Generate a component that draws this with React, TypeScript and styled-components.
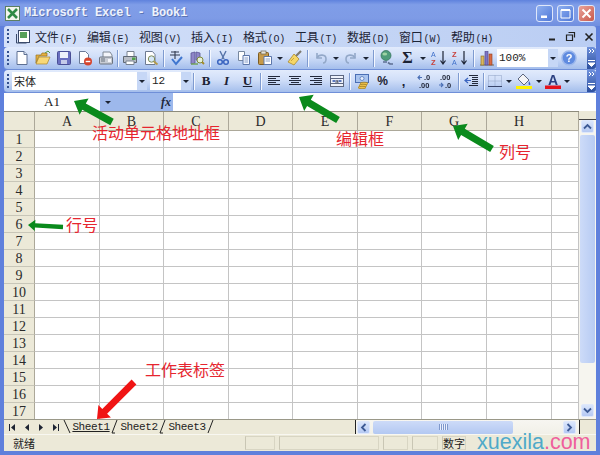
import React from 'react';
import styled, { createGlobalStyle } from 'styled-components';

const MONO = '"Liberation Mono", "Noto Sans CJK SC", monospace';
const SERIF = '"Liberation Serif", serif';
const CJK = '"Noto Sans CJK SC", "Liberation Sans", sans-serif';

const GlobalStyle = createGlobalStyle`
  html, body { margin: 0; padding: 0; background: #fff; }
`;

const Window = styled.div`
  position: relative;
  width: 600px;
  height: 455px;
  box-sizing: border-box;
  padding: 0 4px 4px;
  overflow: hidden;
  display: flex;
  flex-direction: column;
  background: #5f80dc;
  font-family: ${CJK};
`;

const TitleBar = styled.div`
  height: 26px;
  margin: 0 -4px;
  padding: 0 5px;
  flex: none;
  display: flex;
  align-items: center;
  background: linear-gradient(180deg, #5f82dd 0%, #7f9de8 18%, #7e9be6 70%, #6f8edf 100%);
`;

const TitleText = styled.span`
  margin-left: 4px;
  font: bold 12px ${MONO};
  letter-spacing: -0.1px;
  color: #eef2fc;
  text-shadow: 1px 1px 0 #5a74b4;
`;

const WindowButtons = styled.div`
  margin-left: auto;
  display: flex;
  gap: 4px;
`;

const WindowButton = styled.span<{ $close?: boolean }>`
  width: 17px;
  height: 17px;
  box-sizing: border-box;
  border: 1px solid #dfe7fa;
  border-radius: 3px;
  display: flex;
  align-items: center;
  justify-content: center;
  background: ${(p) =>
    p.$close
      ? 'linear-gradient(135deg, #e9a39b, #c9584a)'
      : 'linear-gradient(135deg, #8fb0f0, #4f78d8)'};
`;

const MenuBar = styled.div`
  height: 21px;
  flex: none;
  display: flex;
  align-items: center;
  border-radius: 3px 3px 0 0;
  background: linear-gradient(90deg, #d5e1f9 0%, #c4d5f5 60%, #bacdf3 100%);
`;

const Grip = styled.span`
  width: 2px;
  height: 15px;
  margin-left: 3px;
  flex: none;
  background: repeating-linear-gradient(180deg, #33508f 0 2px, transparent 2px 4px);
`;

const SheetGlyph = styled.span`
  width: 24px;
  margin-left: 2px;
  flex: none;
  display: flex;
  justify-content: center;
`;

const MenuItem = styled.span`
  width: 52px;
  flex: none;
  box-sizing: border-box;
  font-size: 12px;
  line-height: 21px;
  color: #1c2436;
  white-space: nowrap;
  letter-spacing: -0.2px;
`;

const MenuKey = styled.span`
  font: 10px ${MONO};
  margin-left: 1px;
`;

const MenuControls = styled.div`
  margin-left: auto;
  width: 46px;
  display: flex;
  justify-content: space-between;
  align-items: center;
  padding-right: 2px;
  font-size: 12px;
`;

const Toolbar = styled.div`
  height: 23px;
  flex: none;
  display: flex;
  align-items: center;
  border-bottom: 1px solid #6f8fd8;
  box-sizing: border-box;
  background: linear-gradient(180deg, #e2ebfc 0%, #d0def8 45%, #a4beec 100%);
  border-radius: 4px 0 0 4px;
`;

const Tool = styled.span<{ $w?: number }>`
  width: ${(p) => p.$w ?? 21}px;
  height: 20px;
  flex: none;
  display: flex;
  align-items: center;
  justify-content: center;
  svg {
    filter: blur(0.3px);
  }
`;

const Separator = styled.span<{ $w?: number }>`
  width: ${(p) => p.$w ?? 3}px;
  height: 17px;
  flex: none;
  display: flex;
  justify-content: center;
  &::before {
    content: '';
    width: 1px;
    background: #7f9bd0;
    box-shadow: 1px 0 0 #f4f8ff;
  }
`;

const DropCaret = styled.span`
  width: 0;
  height: 0;
  border-left: 3px solid transparent;
  border-right: 3px solid transparent;
  border-top: 3px solid #1d2433;
`;

const Combo = styled.span<{ $w: number; $gap?: number }>`
  width: ${(p) => p.$w}px;
  height: 18px;
  margin-right: ${(p) => p.$gap ?? 0}px;
  flex: none;
  box-sizing: border-box;
  display: flex;
  align-items: center;
  background: #fff;
`;

const ComboText = styled.span<{ $mono?: boolean }>`
  flex: 1;
  padding-left: 2px;
  font: 11px ${(p) => (p.$mono ? MONO : CJK)};
  color: #222;
  white-space: nowrap;
  overflow: hidden;
`;

const ComboArrow = styled.span`
  width: 10px;
  height: 100%;
  flex: none;
  display: flex;
  align-items: center;
  justify-content: center;
  background: #c6d7f6;
`;

const ToolEnd = styled.span`
  margin-left: auto;
  width: 9px;
  height: 22px;
  flex: none;
  display: flex;
  flex-direction: column;
  align-items: center;
  justify-content: space-between;
  padding: 2px 0;
  box-sizing: border-box;
  border-radius: 0 3px 3px 0;
  background: linear-gradient(180deg, #6f91dc, #2c4f9e);
`;

const Letter = styled.span<{ $italic?: boolean; $underline?: boolean; $serif?: boolean; $size?: number; $light?: boolean }>`
  font: ${(p) => (p.$light ? 'normal' : 'bold')} ${(p) => p.$size ?? 13}px ${(p) => (p.$serif ? SERIF : '"Liberation Sans", sans-serif')};
  font-style: ${(p) => (p.$italic ? 'italic' : 'normal')};
  text-decoration: ${(p) => (p.$underline ? 'underline' : 'none')};
  color: #1b2233;
`;

const FormulaBar = styled.div`
  height: 18px;
  flex: none;
  display: flex;
  background: #fff;
`;

const NameBox = styled.div`
  width: 96px;
  flex: none;
  text-align: center;
  font: 13px/18px ${SERIF};
  color: #222;
`;

const FormulaTools = styled.div`
  width: 73px;
  flex: none;
  padding: 0 2px 0 5px;
  box-sizing: border-box;
  display: flex;
  align-items: center;
  justify-content: space-between;
  background: #9db8ec;
`;

const FxMark = styled.span`
  font: italic bold 12px ${SERIF};
  color: #20283a;
`;

const SheetArea = styled.div`
  flex: 1;
  min-height: 0;
  display: flex;
  background: #fff;
`;

const CellGrid = styled.div`
  width: 575px;
  flex: none;
  display: grid;
  grid-template-columns: 31px 65px 64px 65px 64px 65px 64px 65px 65px 27px;
  grid-template-rows: 19px repeat(17, 17px);
  align-content: start;
  border-top: 1px solid #8d8b7c;
`;

const ColHead = styled.div`
  box-sizing: border-box;
  background: #ece9d8;
  border-right: 1px solid #aca899;
  border-bottom: 1px solid #aca899;
  text-align: center;
  font: 14px/19px ${SERIF};
  color: #2a2a2a;
`;

const RowHead = styled.div`
  box-sizing: border-box;
  background: #ece9d8;
  border-right: 1px solid #aca899;
  border-bottom: 1px solid #c8c6b8;
  text-align: center;
  font: 14px/18px ${SERIF};
  color: #2a2a2a;
`;

const Cell = styled.div`
  box-sizing: border-box;
  border-right: 1px solid #c4c4c4;
  border-bottom: 1px solid #c4c4c4;
`;

const VScroll = styled.div`
  width: 17px;
  flex: none;
  display: flex;
  flex-direction: column;
  align-items: center;
  background: #f6f5ef;
`;

const VScrollHead = styled.div`
  width: 100%;
  height: 8px;
  flex: none;
  border-bottom: 1px solid #444;
  background: #ece9d8;
`;

const ScrollButton = styled.span`
  width: 13px;
  height: 13px;
  flex: none;
  border-radius: 2px;
  display: flex;
  align-items: center;
  justify-content: center;
  background: linear-gradient(180deg, #dbe6fb, #b5c9f3);
  border: 1px solid #dfe8fb;
  box-sizing: border-box;
`;

const VThumb = styled.div`
  width: 15px;
  height: 228px;
  margin: 2px 0 41px;
  flex: none;
  border-radius: 2px;
  background: linear-gradient(90deg, #cddbf8, #b7cbf3);
`;

const TabRow = styled.div`
  height: 15px;
  flex: none;
  display: flex;
  align-items: center;
  background: #ece9d8;
  border-top: 1px solid #9a9888;
  box-sizing: border-box;
`;

const TabNav = styled.div`
  width: 59px;
  flex: none;
  display: flex;
  justify-content: space-around;
  align-items: center;
  padding-left: 1px;
  box-sizing: border-box;
`;

const Tabs = styled.div`
  width: 292px;
  flex: none;
  display: flex;
  align-items: center;
`;

const TabLabel = styled.span<{ $active?: boolean }>`
  width: 40px;
  flex: none;
  text-align: center;
  font: 11px/14px ${MONO};
  letter-spacing: -0.4px;
  color: #222;
  text-decoration: ${(p) => (p.$active ? 'underline' : 'none')};
`;

const HScroll = styled.div`
  width: 225px;
  height: 14px;
  flex: none;
  box-sizing: border-box;
  display: flex;
  align-items: center;
  padding: 0 1px;
  border-left: 1px solid #222;
  border-right: 1px solid #222;
  background: linear-gradient(180deg, #f7f6f1, #f1f0e8);
`;

const HThumb = styled.div`
  width: 140px;
  height: 13px;
  margin: 0 50px 0 3px;
  flex: none;
  border-radius: 2px;
  display: flex;
  align-items: center;
  justify-content: center;
  background: linear-gradient(180deg, #cddbf8, #b3c8f2);
`;

const ThumbRidges = styled.span`
  width: 9px;
  height: 6px;
  background: repeating-linear-gradient(90deg, #7f98cc 0 1px, #eaf0fd 1px 2px);
`;

const StatusBar = styled.div`
  height: 17px;
  flex: none;
  display: flex;
  align-items: center;
  background: #ece9d8;
  border-top: 1px solid #f8f7f1;
  box-sizing: border-box;
`;

const StatusText = styled.span`
  margin-left: 9px;
  width: 232px;
  flex: none;
  font-size: 11px;
  color: #222;
`;

const StatusPanel = styled.span<{ $w: number }>`
  width: ${(p) => p.$w}px;
  height: 14px;
  margin-right: 4px;
  flex: none;
  box-sizing: border-box;
  border: 1px solid #d8d5c3;
  border-left-color: #c9c6b4;
  font-size: 11px;
  line-height: 13px;
  color: #222;
  white-space: nowrap;
`;

const Overlay = styled.svg`
  position: absolute;
  left: 0;
  top: 0;
  pointer-events: none;
`;

const Callout = styled.span<{ $x: number; $y: number }>`
  position: absolute;
  left: ${(p) => p.$x}px;
  top: ${(p) => p.$y}px;
  font-size: 16px;
  line-height: 18px;
  color: #e6262f;
  white-space: nowrap;
`;

const Watermark = styled.span`
  position: absolute;
  left: 477px;
  top: 432px;
  font: 21.500px/21px "Liberation Sans", sans-serif;
  color: #4fa9c9;
`;

const WatermarkCom = styled.span`
  color: #ef5f9c;
`;

type IconProps = { children: React.ReactNode; size?: number };
const Ico = ({ children, size = 16 }: IconProps) => (
  <svg width={size} height={size} viewBox="0 0 16 16">
    {children}
  </svg>
);

const Doc = () => <path d="M3 1.5h7l3 3v10H3z" fill="#fff" stroke="#5c6f92" />;

const icons = {
  newDoc: <Ico><Doc /><path d="M10 1.5v3h3" fill="#dfe7f5" stroke="#5c6f92" /></Ico>,
  open: (
    <Ico>
      <path d="M1 5h5l1-2h5v3H4L1 13z" fill="#e5b040" stroke="#9a7420" strokeWidth=".7" />
      <path d="M1 14l3-7h11l-3 7z" fill="#f8d877" stroke="#a98428" strokeWidth=".7" />
      <path d="M10 3l3-2 2 2" fill="none" stroke="#4f9a4a" />
    </Ico>
  ),
  save: (
    <Ico>
      <rect x="1.5" y="1.5" width="13" height="13" rx="1" fill="#6a6fc0" stroke="#4a4f96" />
      <rect x="4" y="2" width="8" height="6" fill="#eef1fb" />
      <rect x="5" y="10" width="6" height="4" fill="#c5cbea" />
    </Ico>
  ),
  permission: (
    <Ico>
      <path d="M2.5 1.5h6l3 3v9h-9z" fill="#fff" stroke="#6a7a98" />
      <circle cx="11" cy="11.5" r="4" fill="#d6442c" />
      <rect x="8.7" y="10.8" width="4.6" height="1.4" fill="#fff" />
    </Ico>
  ),
  mail: (
    <Ico>
      <path d="M5 2h7l2 3v4H5z" fill="#f3f5fa" stroke="#7f8894" />
      <rect x="1.5" y="7" width="13" height="7" rx="1" fill="#c8ccd4" stroke="#6c7480" />
      <path d="M3 9h4M3 11h4" stroke="#69727f" />
      <rect x="10" y="9" width="3" height="3" fill="#f5f6fa" />
    </Ico>
  ),
  print: (
    <Ico>
      <path d="M5 1.5h7v5H5z" fill="#fff" stroke="#788290" />
      <path d="M1.5 6.5h13l0 6h-13z" fill="#b9bec7" stroke="#606874" />
      <path d="M4 11h8v3.5H4z" fill="#fff" stroke="#788290" />
      <rect x="10" y="7.5" width="3.5" height="2.5" fill="#4fa04a" />
    </Ico>
  ),
  preview: (
    <Ico>
      <path d="M2.5 1.5h7l2.5 3v10h-9.500z" fill="#fff" stroke="#6d7a92" />
      <circle cx="8.500" cy="9" r="3.200" fill="#d6e8f7" stroke="#7f8c58" />
      <path d="M11 11.500l3.500 3" stroke="#b49a48" strokeWidth="1.800" />
    </Ico>
  ),
  spell: (
    <Ico>
      <path d="M3 2h8M7 1v5M2 5h10M7 6v3" stroke="#30394e" strokeWidth="1.100" fill="none" />
      <path d="M4 9l4 5 6-7" stroke="#3f76cf" strokeWidth="2" fill="none" />
    </Ico>
  ),
  research: (
    <Ico>
      <path d="M2 3l4-1v11l-4 1zM7 2l4 1v7H7z" fill="#8f86c8" stroke="#5c5596" strokeWidth=".8" />
      <circle cx="11" cy="10" r="3" fill="#e6f0d9" stroke="#7d8a3a" />
      <path d="M13 12l2 2" stroke="#a38a28" strokeWidth="1.800" />
      <path d="M2 14h7" stroke="#73a05a" strokeWidth="1.500" />
    </Ico>
  ),
  cut: (
    <Ico>
      <path d="M5 1l4 8M11 1L7 9" stroke="#5673a8" strokeWidth="1.400" fill="none" />
      <circle cx="5" cy="12" r="2.300" fill="none" stroke="#3a64c0" strokeWidth="1.500" />
      <circle cx="11" cy="12" r="2.300" fill="none" stroke="#3a64c0" strokeWidth="1.500" />
    </Ico>
  ),
  copy: (
    <Ico>
      <path d="M2.500 1.500h6v9h-6z" fill="#fff" stroke="#76879f" />
      <path d="M7 5.500h6.500v9H7z" fill="#f2f6ff" stroke="#5d77aa" />
      <path d="M8.500 8h3.500M8.500 10h3.500M8.500 12h3.500" stroke="#8da2c8" />
    </Ico>
  ),
  paste: (
    <Ico>
      <rect x="1.500" y="2.500" width="10" height="12" rx="1" fill="#c69a4a" stroke="#7c5c22" />
      <rect x="4" y="1" width="5" height="3" fill="#e8e4d8" stroke="#6c6350" strokeWidth=".7" />
      <path d="M7 6.500h7.500v8H7z" fill="#fff" stroke="#5d77aa" />
      <path d="M8.500 9h4.500M8.500 11h4.500" stroke="#8da2c8" />
    </Ico>
  ),
  painter: (
    <Ico>
      <path d="M14 1L9 6" stroke="#7d7a70" strokeWidth="2.200" />
      <path d="M7 4l5 5-5 6-6-3z" fill="#f5d667" stroke="#a98a30" strokeWidth=".8" />
      <path d="M4 11l3-3" stroke="#c9a43c" />
    </Ico>
  ),
  undo: (
    <Ico>
      <path d="M4 3v5h5" fill="none" stroke="#93a8c8" strokeWidth="1.600" />
      <path d="M4 8c2-4 9-4 9 1 0 2-1 4-3 4" fill="none" stroke="#93a8c8" strokeWidth="1.600" />
    </Ico>
  ),
  redo: (
    <Ico>
      <path d="M12 3v5H7" fill="none" stroke="#93a8c8" strokeWidth="1.600" />
      <path d="M12 8c-2-4-9-4-9 1 0 2 1 4 3 4" fill="none" stroke="#93a8c8" strokeWidth="1.600" />
    </Ico>
  ),
  link: (
    <Ico>
      <circle cx="7" cy="5.500" r="5" fill="#4f9c7a" stroke="#2f6e58" strokeWidth=".7" />
      <ellipse cx="5.800" cy="4" rx="2.400" ry="1.600" fill="#9ed3a4" />
      <path d="M4 12h4M9 12.500l2 1.500h3" fill="none" stroke="#5e6f92" strokeWidth="1.700" />
    </Ico>
  ),
  sortAsc: (
    <Ico>
      <text x="0" y="6.500" fontSize="7" fontFamily="Liberation Sans" fill="#3d6ec9">A</text>
      <text x="0" y="15" fontSize="7.500" fontFamily="Liberation Sans" fontWeight="bold" fill="#c8403a">Z</text>
      <path d="M12 1v12M9.500 10.500l2.500 3.500 2.500-3.500" fill="none" stroke="#1e2536" strokeWidth="1.200" />
    </Ico>
  ),
  sortDesc: (
    <Ico>
      <text x="0" y="6.500" fontSize="7.500" fontFamily="Liberation Sans" fontWeight="bold" fill="#c8403a">Z</text>
      <text x="0" y="15" fontSize="7" fontFamily="Liberation Sans" fill="#3d6ec9">A</text>
      <path d="M12 1v12M9.500 10.500l2.500 3.500 2.500-3.500" fill="none" stroke="#1e2536" strokeWidth="1.200" />
    </Ico>
  ),
  chart: (
    <Ico>
      <path d="M1 15h14" stroke="#7a6a48" />
      <rect x="2" y="6" width="3" height="9" fill="#d9b860" stroke="#8a6a20" strokeWidth=".6" />
      <rect x="6" y="1.500" width="3" height="13.500" fill="#7c74c4" stroke="#4a428a" strokeWidth=".6" />
      <rect x="10" y="4" width="3" height="11" fill="#d86a42" stroke="#8e3d20" strokeWidth=".6" />
    </Ico>
  ),
  help: (
    <Ico>
      <circle cx="8" cy="8" r="7" fill="#5f8be0" stroke="#9db8ec" strokeWidth="1.500" />
      <text x="8" y="12" textAnchor="middle" fontSize="11" fontFamily="Liberation Sans" fontWeight="bold" fill="#fff">?</text>
    </Ico>
  ),
  alignLeft: <Ico><path d="M2 3.500h12M2 5.500h8M2 7.500h12M2 9.500h8M2 11.500h12" stroke="#232a3c" /></Ico>,
  alignCenter: <Ico><path d="M2 3.500h12M4 5.500h8M2 7.500h12M4 9.500h8M2 11.500h12" stroke="#232a3c" /></Ico>,
  alignRight: <Ico><path d="M2 3.500h12M6 5.500h8M2 7.500h12M6 9.500h8M2 11.500h12" stroke="#232a3c" /></Ico>,
  merge: (
    <Ico>
      <rect x="1.500" y="2.500" width="13" height="11" fill="#eef2fb" stroke="#5d6780" />
      <path d="M1.500 5.500h13M1.500 10.500h13" stroke="#5d6780" />
      <path d="M3.500 8h3M12.500 8h-3" stroke="#2b4fa8" strokeWidth="1.300" />
      <text x="8" y="10" textAnchor="middle" fontSize="6" fontFamily="Liberation Sans" fill="#1b2233">a</text>
    </Ico>
  ),
  currency: (
    <Ico>
      <rect x="1.500" y="1.500" width="13" height="8" fill="#a9c4ee" stroke="#4a6fb5" />
      <circle cx="8" cy="5.500" r="2" fill="#e8f0fc" stroke="#4a6fb5" strokeWidth=".7" />
      <ellipse cx="10" cy="10.500" rx="4" ry="1.300" fill="#eec24c" stroke="#a07c1c" strokeWidth=".7" />
      <ellipse cx="9" cy="12.500" rx="4" ry="1.300" fill="#eec24c" stroke="#a07c1c" strokeWidth=".7" />
      <ellipse cx="8" cy="14.500" rx="4" ry="1.200" fill="#eec24c" stroke="#a07c1c" strokeWidth=".7" />
    </Ico>
  ),
  incDecimal: (
    <Ico>
      <path d="M1 4.500h4M3 2.500l-2 2 2 2" fill="none" stroke="#4a6fb5" strokeWidth="1.100" />
      <text x="7" y="7" fontSize="7.500" fontFamily="Liberation Sans" fontWeight="bold" fill="#232a3c">.0</text>
      <text x="2" y="15" fontSize="7.500" fontFamily="Liberation Sans" fontWeight="bold" fill="#232a3c">.00</text>
    </Ico>
  ),
  decDecimal: (
    <Ico>
      <text x="2" y="7" fontSize="7.500" fontFamily="Liberation Sans" fontWeight="bold" fill="#232a3c">.00</text>
      <path d="M1 12h4M3 10l2 2-2 2" fill="none" stroke="#4a6fb5" strokeWidth="1.100" />
      <text x="7" y="15" fontSize="7.500" fontFamily="Liberation Sans" fontWeight="bold" fill="#232a3c">.0</text>
    </Ico>
  ),
  indent: (
    <Ico>
      <path d="M6 2.500h9M9 4.500h6M9 6.500h6M9 8.500h6M9 10.500h6M6 12.500h9" stroke="#232a3c" />
      <path d="M8 7.500H2M5 5l-3 2.500L5 10" fill="none" stroke="#3a64c0" strokeWidth="1.200" />
    </Ico>
  ),
  borders: (
    <Ico>
      <rect x="1.500" y="2.500" width="13" height="11" fill="none" stroke="#8ea0c4" strokeDasharray="1 1" />
      <path d="M8 2.500v11M1.500 8h13" stroke="#8ea0c4" strokeDasharray="1 1" />
      <path d="M1 13.500h14" stroke="#39456a" />
    </Ico>
  ),
  fill: (
    <Ico>
      <path d="M7 1l6 6-5 5-6-6z" fill="#f4f4f6" stroke="#5d6780" />
      <path d="M13 8c1 2 2 3 1 4-1 .5-2-.5-1-4z" fill="#3a64c0" />
      <rect x="0" y="13" width="16" height="3" fill="#fff200" />
    </Ico>
  ),
  fontColor: (
    <Ico>
      <text x="8" y="11.500" textAnchor="middle" fontSize="14" fontFamily="Liberation Sans" fontWeight="bold" fill="#2a3f80">A</text>
      <rect x="0" y="12.500" width="16" height="3.500" fill="#e3121c" />
    </Ico>
  ),
};

const ChevronGlyph = ({ up }: { up: boolean }) => (
  <svg width="9" height="7" viewBox="0 0 9 7">
    <path d={up ? 'M1 5.500l3.500-3.500 3.500 3.500' : 'M1 1.500l3.500 3.500 3.500-3.500'} fill="none" stroke="#3d5a94" strokeWidth="1.800" />
  </svg>
);

const SideGlyph = ({ left }: { left: boolean }) => (
  <svg width="7" height="9" viewBox="0 0 7 9">
    <path d={left ? 'M5.500 1L2 4.500 5.500 8' : 'M1.500 1L5 4.500 1.500 8'} fill="none" stroke="#3d5a94" strokeWidth="1.800" />
  </svg>
);

const GripEnd = () => (
  <ToolEnd>
    <svg width="7" height="5" viewBox="0 0 7 5">
      <path d="M1 0l2 2-2 2M4 0l2 2-2 2" fill="none" stroke="#fff" />
    </svg>
    <svg width="7" height="7" viewBox="0 0 7 7">
      <path d="M0 .500h7M0 3l3.500 3.500L7 3z" stroke="#fff" fill="#fff" />
    </svg>
  </ToolEnd>
);

const Drop = ({ w = 10 }: { w?: number }) => (
  <Tool $w={w}>
    <DropCaret />
  </Tool>
);

const NavGlyph = ({ d }: { d: string }) => (
  <svg width="8" height="9" viewBox="0 0 8 9">
    <path d={d} fill="#1e2433" />
  </svg>
);

const TabEdge = ({ d }: { d: string }) => (
  <svg width="8" height="14" viewBox="0 0 8 14">
    <path d={d} fill="none" stroke="#222" />
  </svg>
);

const arrowPoints = (x1: number, y1: number, x2: number, y2: number, half: number) => {
  // tail -> tip, shaft half-width plus a head twice as wide
  const len = Math.hypot(x2 - x1, y2 - y1);
  const ux = (x2 - x1) / len;
  const uy = (y2 - y1) / len;
  const nx = -uy;
  const ny = ux;
  const headLen = half * 3.2;
  const bx = x2 - ux * headLen;
  const by = y2 - uy * headLen;
  const pts = [
    [x1 + nx * half, y1 + ny * half],
    [bx + nx * half, by + ny * half],
    [bx + nx * half * 2.6, by + ny * half * 2.6],
    [x2, y2],
    [bx - nx * half * 2.6, by - ny * half * 2.6],
    [bx - nx * half, by - ny * half],
    [x1 - nx * half, y1 - ny * half],
  ];
  return pts.map((p) => p.map((v) => v.toFixed(1)).join(',')).join(' ');
};

const columns = ['A', 'B', 'C', 'D', 'E', 'F', 'G', 'H', ''];
const rows = Array.from({ length: 17 }, (_, i) => i + 1);
const menus: [string, string][] = [
  ['文件', 'F'], ['编辑', 'E'], ['视图', 'V'], ['插入', 'I'], ['格式', 'O'],
  ['工具', 'T'], ['数据', 'D'], ['窗口', 'W'], ['帮助', 'H'],
];

export default function App() {
  return (
    <>
      <GlobalStyle />
      <Window>
        <TitleBar>
          <svg width="15" height="15" viewBox="0 0 15 15">
            <rect x=".5" y=".5" width="14" height="14" fill="#f3f6ee" stroke="#5d7f62" />
            <path d="M3 3l9 9M12 3l-9 9" stroke="#2f8a45" strokeWidth="2.600" />
          </svg>
          <TitleText>Microsoft Excel - Book1</TitleText>
          <WindowButtons>
            <WindowButton>
              <svg width="11" height="11" viewBox="0 0 11 11"><rect x="2" y="7.500" width="6" height="2.500" fill="#fff" /></svg>
            </WindowButton>
            <WindowButton>
              <svg width="11" height="11" viewBox="0 0 11 11"><path d="M1 2h9v8H1z" fill="none" stroke="#fff" /><path d="M1 2h9" stroke="#fff" strokeWidth="2" /></svg>
            </WindowButton>
            <WindowButton $close>
              <svg width="11" height="11" viewBox="0 0 11 11"><path d="M1.500 1.500l8 8M9.500 1.500l-8 8" stroke="#fff" strokeWidth="2" /></svg>
            </WindowButton>
          </WindowButtons>
        </TitleBar>

        <MenuBar>
          <Grip />
          <SheetGlyph>
            <svg width="16" height="16" viewBox="0 0 16 16">
              <rect x="3.500" y="1.500" width="11" height="12" fill="#fff" stroke="#3b4a6a" />
              <rect x="5" y="3" width="7" height="6" fill="#58a05a" />
              <path d="M1.500 5v9h10" fill="none" stroke="#3b4a6a" />
            </svg>
          </SheetGlyph>
          {menus.map(([label, key]) => (
            <MenuItem key={key}>
              {label}
              <MenuKey>({key})</MenuKey>
            </MenuItem>
          ))}
          <MenuControls>
            <svg width="9" height="9" viewBox="0 0 9 9"><path d="M1 7.500h6" stroke="#222" strokeWidth="2" /></svg>
            <svg width="11" height="11" viewBox="0 0 11 11"><path d="M3.500 1.500h6v5M1.500 4h6v5.500h-6z" fill="none" stroke="#222" strokeWidth="1.200" /></svg>
            <svg width="10" height="10" viewBox="0 0 10 10"><path d="M1.500 1.500l7 7M8.500 1.500l-7 7" stroke="#222" strokeWidth="1.600" /></svg>
          </MenuControls>
        </MenuBar>

        <Toolbar>
          <Grip />
          <Tool $w={2} />
          <Tool>{icons.newDoc}</Tool>
          <Tool>{icons.open}</Tool>
          <Tool>{icons.save}</Tool>
          <Tool>{icons.permission}</Tool>
          <Tool>{icons.mail}</Tool>
          <Separator />
          <Tool>{icons.print}</Tool>
          <Tool>{icons.preview}</Tool>
          <Separator $w={4} />
          <Tool>{icons.spell}</Tool>
          <Tool>{icons.research}</Tool>
          <Separator $w={5} />
          <Tool>{icons.cut}</Tool>
          <Tool>{icons.copy}</Tool>
          <Tool>{icons.paste}</Tool>
          <Drop w={9} />
          <Tool>{icons.painter}</Tool>
          <Separator $w={5} />
          <Tool>{icons.undo}</Tool>
          <Drop w={9} />
          <Tool>{icons.redo}</Tool>
          <Drop w={9} />
          <Separator $w={6} />
          <Tool>{icons.link}</Tool>
          <Tool><Letter $serif $size={16}>Σ</Letter></Tool>
          <Drop />
          <Tool>{icons.sortAsc}</Tool>
          <Tool>{icons.sortDesc}</Tool>
          <Separator $w={6} />
          <Tool>{icons.chart}</Tool>
          <Combo $w={61}>
            <ComboText $mono>100%</ComboText>
            <ComboArrow><DropCaret /></ComboArrow>
          </Combo>
          <Tool>{icons.help}</Tool>
          <GripEnd />
        </Toolbar>

        <Toolbar>
          <Grip />
          <Tool $w={3} />
          <Combo $w={135} $gap={3}>
            <ComboText>宋体</ComboText>
            <ComboArrow><DropCaret /></ComboArrow>
          </Combo>
          <Combo $w={41}>
            <ComboText $mono>12</ComboText>
            <ComboArrow><DropCaret /></ComboArrow>
          </Combo>
          <Separator $w={5} />
          <Tool $w={20}><Letter $serif>B</Letter></Tool>
          <Tool $w={21}><Letter $serif $italic>I</Letter></Tool>
          <Tool $w={21}><Letter $serif $underline>U</Letter></Tool>
          <Separator $w={5} />
          <Tool>{icons.alignLeft}</Tool>
          <Tool>{icons.alignCenter}</Tool>
          <Tool>{icons.alignRight}</Tool>
          <Tool>{icons.merge}</Tool>
          <Separator $w={4} />
          <Tool>{icons.currency}</Tool>
          <Tool><Letter $size={12}>%</Letter></Tool>
          <Tool><Letter $size={13}>,</Letter></Tool>
          <Tool>{icons.incDecimal}</Tool>
          <Tool>{icons.decDecimal}</Tool>
          <Separator $w={4} />
          <Tool>{icons.indent}</Tool>
          <Separator $w={5} />
          <Tool $w={18}>{icons.borders}</Tool>
          <Drop />
          <Tool $w={20}>{icons.fill}</Tool>
          <Drop />
          <Tool $w={18}>{icons.fontColor}</Tool>
          <Drop />
          <GripEnd />
        </Toolbar>

        <FormulaBar>
          <NameBox>A1</NameBox>
          <FormulaTools>
            <DropCaret />
            <FxMark>fx</FxMark>
          </FormulaTools>
        </FormulaBar>

        <SheetArea>
          <CellGrid>
            <ColHead />
            {columns.map((c) => (
              <ColHead key={c || 'I'}>{c}</ColHead>
            ))}
            {rows.map((r) => (
              <React.Fragment key={r}>
                <RowHead>{r}</RowHead>
                {columns.map((c) => (
                  <Cell key={c || 'I'} />
                ))}
              </React.Fragment>
            ))}
          </CellGrid>
          <VScroll>
            <VScrollHead />
            <ScrollButton><ChevronGlyph up /></ScrollButton>
            <VThumb />
            <ScrollButton><ChevronGlyph up={false} /></ScrollButton>
          </VScroll>
        </SheetArea>

        <TabRow>
          <TabNav>
            <NavGlyph d="M1 1h1v7H1zM7 1v7L3 4.500z" />
            <NavGlyph d="M6 1v7L2 4.500z" />
            <NavGlyph d="M2 1v7l4-3.500z" />
            <NavGlyph d="M1 1v7l4-3.500zM6 1h1v7H6z" />
          </TabNav>
          <Tabs>
            <TabEdge d="M1 0l6 13" />
            <TabLabel $active>Sheet1</TabLabel>
            <TabEdge d="M1 13l5-13M1 13l3 0" />
            <TabLabel>Sheet2</TabLabel>
            <TabEdge d="M1 13l5-13M1 13l3 0" />
            <TabLabel>Sheet3</TabLabel>
            <TabEdge d="M1 13l5-13" />
          </Tabs>
          <HScroll>
            <ScrollButton><SideGlyph left /></ScrollButton>
            <HThumb><ThumbRidges /></HThumb>
            <ScrollButton><SideGlyph left={false} /></ScrollButton>
          </HScroll>
        </TabRow>

        <StatusBar>
          <StatusText>就绪</StatusText>
          <StatusPanel $w={30} />
          <StatusPanel $w={100} />
          <StatusPanel $w={25} />
          <StatusPanel $w={26} />
          <StatusPanel $w={24}>数字</StatusPanel>
        </StatusBar>

        <Overlay width="600" height="455" viewBox="0 0 600 455">
          <polygon points={arrowPoints(112, 122, 74, 101, 3.6)} fill="#0a8a1c" />
          <polygon points={arrowPoints(338, 120, 299, 97, 3.6)} fill="#0a8a1c" />
          <polygon points={arrowPoints(492, 149, 453, 126, 3.6)} fill="#0a8a1c" />
          <polygon points={arrowPoints(63, 227, 28, 225, 2.2)} fill="#0a8a1c" />
          <polygon points={arrowPoints(134, 382, 97, 419, 3.4)} fill="#f01414" />
        </Overlay>
        <Callout $x={92} $y={123}>活动单元格地址框</Callout>
        <Callout $x={336} $y={129}>编辑框</Callout>
        <Callout $x={499} $y={142}>列号</Callout>
        <Callout $x={66} $y={215}>行号</Callout>
        <Callout $x={145} $y={360}>工作表标签</Callout>
        <Watermark>xuexila<WatermarkCom>.com</WatermarkCom></Watermark>
      </Window>
    </>
  );
}
